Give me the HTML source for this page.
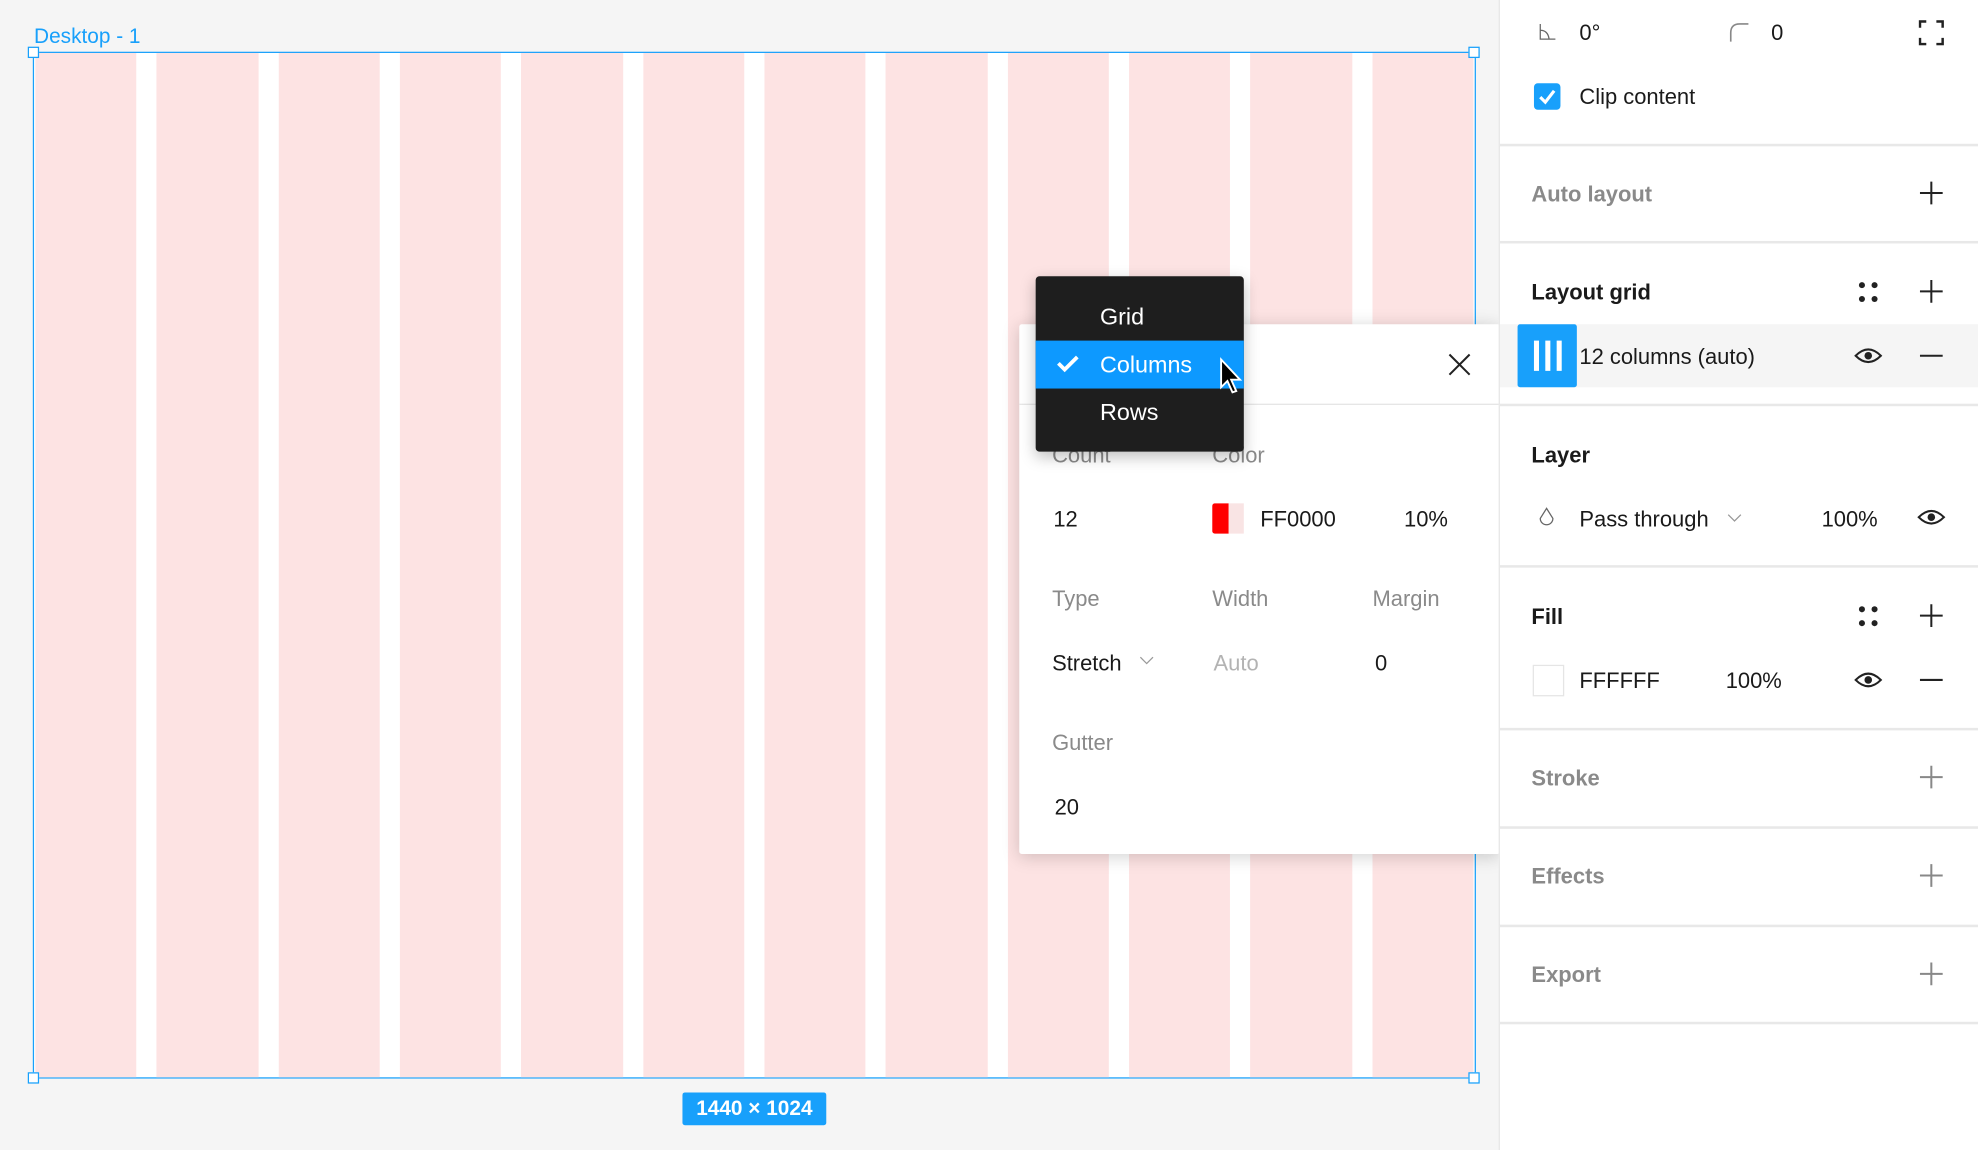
<!DOCTYPE html>
<html><head><meta charset="utf-8"><style>
*{margin:0;padding:0;box-sizing:border-box}
html,body{width:1978px;height:1150px;overflow:hidden;background:#f5f5f5}
#w{position:absolute;left:0;top:0;width:1568px;height:912px;transform:scale(1.26148);transform-origin:0 0;font-family:"Liberation Sans",sans-serif;font-size:17.4px;color:#1a1a1a}
.a{position:absolute;white-space:nowrap}
.frame{position:absolute;left:26px;top:41px;width:1144px;height:814px;border:1px solid #18a0fb;background:#fff;display:flex;gap:16px;padding:0 1px}
.frame div{flex:1;background:#fde3e3}
.h{position:absolute;width:9px;height:9px;background:#fff;border:1px solid #18a0fb}
.panel{position:absolute;left:1188px;top:0;width:380px;height:912px;background:#fff;border-left:1px solid #e5e5e5}
.dv{position:absolute;left:1189px;width:379px;height:2px;background:#e8e8e8}
.t{transform:translateY(-45%)}
.b{font-weight:bold}
.g{color:#8a8a8a}
</style></head><body><div id="w">
<div class="a" style="left:27px;top:20px;color:#18a0fb;font-size:16.5px">Desktop - 1</div>
<div class="frame"><div></div><div></div><div></div><div></div><div></div><div></div><div></div><div></div><div></div><div></div><div></div><div></div></div>
<div class="h" style="left:22px;top:37px"></div><div class="h" style="left:1164px;top:37px"></div>
<div class="h" style="left:22px;top:850px"></div><div class="h" style="left:1164px;top:850px"></div>
<div class="a" style="left:541px;top:866px;width:114px;height:26px;background:#18a0fb;color:#fff;border-radius:2px;font-size:16.5px;text-align:center;line-height:27px;font-weight:bold">1440 × 1024</div>

<div class="a" style="left:808px;top:257px;width:381px;height:420px;background:#fff;box-shadow:0 2px 14px rgba(0,0,0,.18);border-radius:2px"></div>
<div class="a" style="left:808px;top:320px;width:381px;height:1px;background:#e5e5e5"></div>
<svg class="a" style="left:1147px;top:279px" width="20" height="20"><path d="M2 2L18 18M18 2L2 18" stroke="#222" stroke-width="1.6"/></svg>
<div class="a t g" style="left:834px;top:360px">Count</div><div class="a t g" style="left:961px;top:360px">Color</div>
<div class="a t" style="left:835px;top:411px">12</div>
<div class="a" style="left:961px;top:399px;width:13px;height:24px;background:#f00;border-radius:2px 0 0 2px"></div>
<div class="a" style="left:974px;top:399px;width:12px;height:24px;background:#f9e4e4"></div>
<div class="a t" style="left:999px;top:411px">FF0000</div><div class="a t" style="left:1113px;top:411px">10%</div>
<div class="a t g" style="left:834px;top:474px">Type</div><div class="a t g" style="left:961px;top:474px">Width</div><div class="a t g" style="left:1088px;top:474px">Margin</div>
<div class="a t" style="left:834px;top:525px">Stretch</div>
<svg class="a" style="left:903px;top:520px" width="12" height="8"><path d="M1 1L6 6L11 1" stroke="#999" fill="none"/></svg>
<div class="a t" style="left:962px;top:525px;color:#b3b3b3">Auto</div><div class="a t" style="left:1090px;top:525px">0</div>
<div class="a t g" style="left:834px;top:588px">Gutter</div><div class="a t" style="left:836px;top:639px">20</div>

<div class="a" style="left:821px;top:219px;width:165px;height:139px;background:#1e1e1e;border-radius:3px;box-shadow:0 4px 12px rgba(0,0,0,.25)"></div>
<div class="a" style="left:821px;top:270px;width:165px;height:38px;background:#0d99ff"></div>
<div class="a t" style="left:872px;top:250px;color:#fff;font-size:18.5px">Grid</div>
<div class="a t" style="left:872px;top:288px;color:#fff;font-size:18.5px">Columns</div>
<div class="a t" style="left:872px;top:326px;color:#fff;font-size:18.5px">Rows</div>
<svg class="a" style="left:837px;top:280px" width="20" height="16"><path d="M2 8L7 13L17 3" stroke="#fff" stroke-width="3" fill="none"/></svg>
<svg class="a" style="left:966px;top:283px" width="22" height="34"><path d="M2 2L2 24L7 19L11 28L14 27L10 18L17 18Z" fill="#000" stroke="#fff" stroke-width="1.5"/></svg>

<div class="panel"></div>
<svg class="a" style="left:1220px;top:18px" width="14" height="14"><path d="M1 1V13H13M1 6Q7 6 8 13" stroke="#666" fill="none"/></svg>
<div class="a t" style="left:1252px;top:25px">0°</div>
<svg class="a" style="left:1371px;top:18px" width="16" height="16"><path d="M1 15V8Q1 1 8 1H15" stroke="#888" stroke-width="1.3" fill="none"/></svg>
<div class="a t" style="left:1404px;top:25px">0</div>
<svg class="a" style="left:1521px;top:16px" width="20" height="20"><path d="M1 6V1H6M14 1H19V6M19 14V19H14M6 19H1V14" stroke="#222" stroke-width="2" fill="none"/></svg>
<div class="a" style="left:1216px;top:66px;width:21px;height:21px;background:#18a0fb;border-radius:3px"></div>
<svg class="a" style="left:1216px;top:66px" width="21" height="21"><path d="M5 11L9 15L16 6" stroke="#fff" stroke-width="2.5" fill="none"/></svg>
<div class="a t" style="left:1252px;top:76px">Clip content</div>
<div class="dv" style="top:114px"></div>
<div class="a t b g" style="left:1214px;top:153px">Auto layout</div>
<div class="dv" style="top:191px"></div>
<div class="a t b" style="left:1214px;top:231px">Layout grid</div>
<div class="a" style="left:1189px;top:257px;width:379px;height:50px;background:#f5f5f5"></div>
<div class="a" style="left:1203px;top:257px;width:47px;height:50px;background:#18a0fb;border-radius:2px"></div>
<div class="a" style="left:1216px;top:270px;width:4px;height:24px;background:#fff"></div>
<div class="a" style="left:1225px;top:270px;width:4px;height:24px;background:#fff"></div>
<div class="a" style="left:1234px;top:270px;width:4px;height:24px;background:#fff"></div>
<div class="a t" style="left:1252px;top:282px">12 columns (auto)</div>
<div class="dv" style="top:320px"></div>
<div class="a t b" style="left:1214px;top:360px">Layer</div>
<svg class="a" style="left:1219px;top:402px" width="14" height="17"><path d="M7 1L12 9A5 5 0 1 1 2 9Z" stroke="#666" fill="none"/></svg>
<div class="a t" style="left:1252px;top:411px">Pass through</div>
<svg class="a" style="left:1369px;top:407px" width="12" height="8"><path d="M1 1L6 6L11 1" stroke="#999" fill="none"/></svg>
<div class="a t" style="left:1444px;top:411px">100%</div>
<div class="dv" style="top:448px"></div>
<div class="a t b" style="left:1214px;top:488px">Fill</div>
<div class="a" style="left:1215px;top:527px;width:25px;height:25px;border:1px solid #e5e5e5;background:#fff"></div>
<div class="a t" style="left:1252px;top:539px">FFFFFF</div><div class="a t" style="left:1368px;top:539px">100%</div>
<div class="dv" style="top:577px"></div>
<div class="a t b g" style="left:1214px;top:616px">Stroke</div>
<div class="dv" style="top:655px"></div>
<div class="a t b g" style="left:1214px;top:694px">Effects</div>
<div class="dv" style="top:733px"></div>
<div class="a t b g" style="left:1214px;top:772px">Export</div>
<div class="dv" style="top:810px"></div>
<svg class="a" style="left:0;top:0" width="1568" height="912">
<g stroke="#222" stroke-width="1.6"><path d="M1531 144V162M1522 153H1540"/><path d="M1531 222V240M1522 231H1540"/><path d="M1531 479V497M1522 488H1540"/><path d="M1522 282H1540M1522 539H1540"/></g>
<g stroke="#888" stroke-width="1.6"><path d="M1531 607V625M1522 616H1540"/><path d="M1531 685V703M1522 694H1540"/><path d="M1531 763V781M1522 772H1540"/></g>
<g fill="#222"><circle cx="1476" cy="226" r="2.4"/><circle cx="1486" cy="226" r="2.4"/><circle cx="1476" cy="237" r="2.4"/><circle cx="1486" cy="237" r="2.4"/>
<circle cx="1476" cy="483" r="2.4"/><circle cx="1486" cy="483" r="2.4"/><circle cx="1476" cy="494" r="2.4"/><circle cx="1486" cy="494" r="2.4"/>
<circle cx="1481" cy="282" r="3"/><circle cx="1531" cy="410" r="3"/><circle cx="1481" cy="539" r="3"/></g>
<g stroke="#222" stroke-width="1.6" fill="none"><path d="M1471 282Q1481 272 1491 282Q1481 292 1471 282Z"/><path d="M1521 410Q1531 400 1541 410Q1531 420 1521 410Z"/><path d="M1471 539Q1481 529 1491 539Q1481 549 1471 539Z"/></g>
</svg>
</div></body></html>
